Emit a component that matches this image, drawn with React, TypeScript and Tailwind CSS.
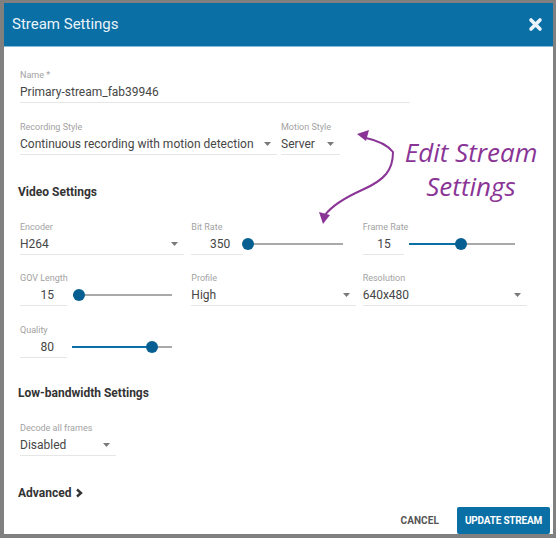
import React from "react";

function Caret() {
  return (
    <svg width="7" height="4" viewBox="0 0 7 4" className="shrink-0">
      <polygon points="0,0 7,0 3.5,4" fill="#7a7a7a" />
    </svg>
  );
}

function Label({ children }: { children: React.ReactNode }) {
  return (
    <div className="h-[12px] text-[9px] leading-[12px] text-[#a2a2a2] whitespace-nowrap">{children}</div>
  );
}

function TextField({ label, value, className }: { label: string; value: string; className?: string }) {
  return (
    <div className={className}>
      <Label>{label}</Label>
      <div className="mt-[1px] h-[21px] border-b border-[#e6e6e6] flex items-center">
        <span className="text-[12px] text-[#464646] whitespace-nowrap">{value}</span>
      </div>
    </div>
  );
}

function SelectField({ label, value, className }: { label: string; value: string; className?: string }) {
  return (
    <div className={className}>
      <Label>{label}</Label>
      <div className="mt-[1px] h-[21px] border-b border-[#e6e6e6] flex items-center justify-between pr-[6px]">
        <span className="text-[12px] text-[#464646] whitespace-nowrap">{value}</span>
        <Caret />
      </div>
    </div>
  );
}

function SliderField({
  label,
  value,
  inputW,
  gap,
  sliderW,
  pct,
}: {
  label: string;
  value: string;
  inputW: number;
  gap: number;
  sliderW: number;
  pct: number;
}) {
  return (
    <div className="flex items-start">
      <div style={{ width: inputW }}>
        <Label>{label}</Label>
        <div className="mt-[1px] h-[21px] border-b border-[#e6e6e6] flex items-center justify-end pr-[13px]">
          <span className="text-[12px] text-[#464646]">{value}</span>
        </div>
      </div>
      <div className="relative mt-[13px] h-[20px]" style={{ marginLeft: gap, width: sliderW }}>
        <div className="absolute left-0 right-0 top-[9px] h-[2px] bg-[#a9a9a9]" />
        <div className="absolute left-0 top-[9px] h-[2px] bg-[#0a6fa5]" style={{ width: `${pct * 100}%` }} />
        <div
          className="absolute top-[4px] w-[12px] h-[12px] rounded-full bg-[#065f90]"
          style={{ left: `calc(${pct * 100}% - 6px)` }}
        />
      </div>
    </div>
  );
}

function Heading({ children }: { children: React.ReactNode }) {
  return <div className="-ml-[2px] text-[12px] leading-[16px] font-bold text-[#333333]">{children}</div>;
}

export default function App() {
  return (
    <div className="relative w-[556px] h-[538px] bg-[#808080] pt-[3px] pl-[4px] pr-[3px] overflow-hidden font-[family-name:Roboto,sans-serif]">
      <div className="w-[549px] h-[531px] bg-white flex flex-col overflow-hidden">
        <div className="h-[44px] shrink-0 bg-[#0a6fa5] border-b border-[#8cbbd9] flex items-center justify-between pl-[8px] pr-[10px]">
          <span className="text-[15px] text-[#eaf3f9]">Stream Settings</span>
          <svg width="15" height="15" viewBox="0 0 15 15">
            <path d="M3 3 L12 12 M12 3 L3 12" stroke="#eaf3f9" strokeWidth="3.6" strokeLinecap="round" />
          </svg>
        </div>

        <div className="flex flex-col pl-[16px] pr-[26px] pt-[22px]">
          <TextField label="Name *" value="Primary-stream_fab39946" className="w-[390px]" />

          <div className="mt-[18px] flex gap-[4px]">
            <SelectField label="Recording Style" value="Continuous recording with motion detection" className="w-[257px]" />
            <SelectField label="Motion Style" value="Server" className="w-[59px]" />
          </div>

          <div className="mt-[29px]">
            <Heading>Video Settings</Heading>
          </div>

          <div className="mt-[21px] grid grid-cols-3 gap-x-[7px]">
            <SelectField label="Encoder" value="H264" />
            <SliderField label="Bit Rate" value="350" inputW={52} gap={3} sliderW={97} pct={0.02} />
            <SliderField label="Frame Rate" value="15" inputW={41} gap={5} sliderW={106} pct={0.49} />
          </div>

          <div className="mt-[17px] grid grid-cols-3 gap-x-[7px]">
            <SliderField label="GOV Length" value="15" inputW={47} gap={6} sliderW={99} pct={0.06} />
            <SelectField label="Profile" value="High" />
            <SelectField label="Resolution" value="640x480" />
          </div>

          <div className="mt-[18px] grid grid-cols-3 gap-x-[7px]">
            <SliderField label="Quality" value="80" inputW={47} gap={5} sliderW={100} pct={0.8} />
          </div>

          <div className="mt-[27px]">
            <Heading>Low-bandwidth Settings</Heading>
          </div>

          <div className="mt-[21px]">
            <SelectField label="Decode all frames" value="Disabled" className="w-[96px]" />
          </div>

          <div className="mt-[29px] -ml-[2px] flex items-center gap-[4px] h-[16px]">
            <span className="text-[12px] leading-[16px] font-bold text-[#333333]">Advanced</span>
            <svg width="8" height="10" viewBox="0 0 8 10">
              <polyline points="2,1.5 6,5 2,8.5" fill="none" stroke="#333333" strokeWidth="2.4" />
            </svg>
          </div>
        </div>

        <div className="mt-[6px] flex justify-end items-center pr-[3px]">
          <span className="mr-[18px] text-[10px] font-bold text-[#555555] tracking-[0.1px]">CANCEL</span>
          <div className="w-[93px] h-[27px] rounded-[2px] bg-[#0a6fa5] flex items-center justify-center">
            <span className="text-[10px] font-bold text-white tracking-[-0.2px]">UPDATE STREAM</span>
          </div>
        </div>
      </div>

      {/* annotation overlay */}
      <div className="absolute left-[400px] top-[135px] w-[142px] text-center text-[26px] leading-[34px] italic text-[#8a3596] font-[family-name:'Open_Sans',sans-serif]">
        Edit Stream
        <br />
        Settings
      </div>
      <svg className="absolute left-0 top-0 pointer-events-none" width="556" height="538" viewBox="0 0 556 538">
        <path
          d="M366 138 Q 385 142 393 152 C 393 170 385 180 362 190 C 342 199 331 207 325 215"
          fill="none"
          stroke="#8a3596"
          strokeWidth="2"
        />
        <polygon points="357,134 369,130 366,141" fill="#8a3596" />
        <polygon points="323,224 319,212 330,215" fill="#8a3596" />
      </svg>
    </div>
  );
}
